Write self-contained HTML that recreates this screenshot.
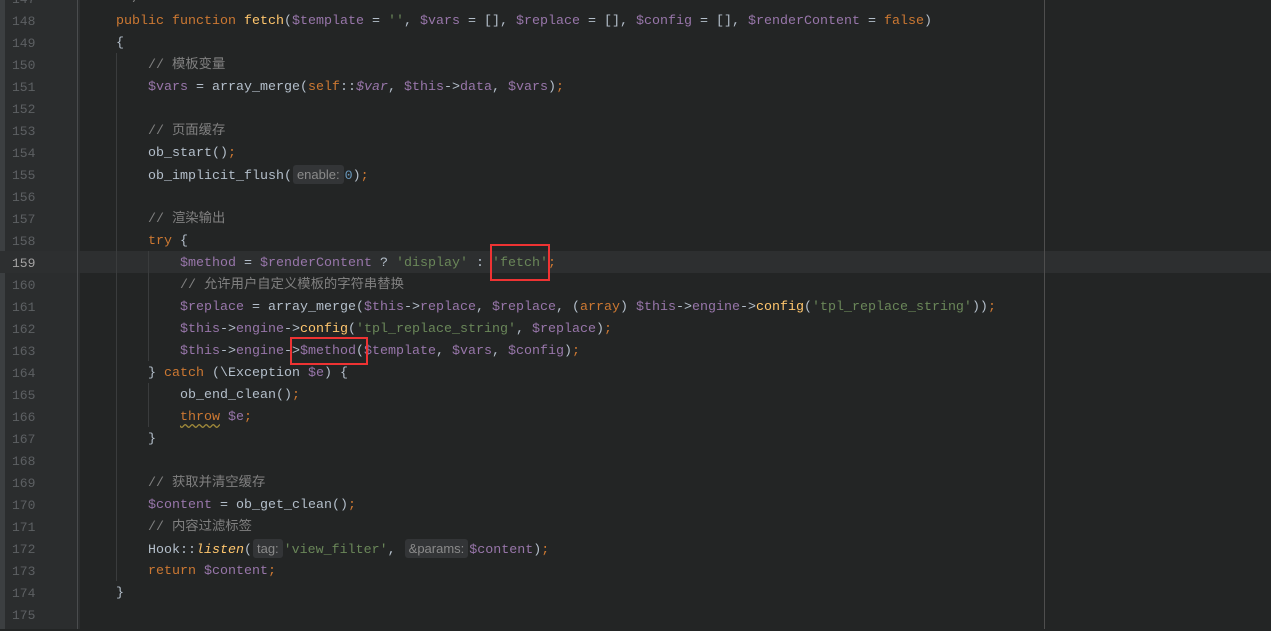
<!DOCTYPE html>
<html><head><meta charset="utf-8"><style>
body{margin:0;width:1271px;height:629px;overflow:hidden;background:#232525;position:relative;font-family:"Liberation Mono","Noto Sans CJK SC",monospace;font-size:13.33px}
.gut{position:absolute;left:0;top:0;width:80px;height:629px;background:#2b2d2e}
.strip{position:absolute;left:0;top:0;width:5px;height:629px;background:#3c3f41}
.fold{position:absolute;left:77px;top:0;width:1px;height:629px;background:#4a4c4e}
.margin{position:absolute;left:1044px;top:0;width:1px;height:629px;background:#4e4e4e}
.cur{position:absolute;left:0;width:1271px;top:251px;height:22px;background:#2d2f30}
.wrap{position:absolute;left:0;top:2px;width:1271px;height:629px}
.ln{position:absolute;left:12px;width:30px;height:22px;line-height:22px;color:#5d6063;font-size:13px}
.l{position:absolute;left:84px;height:22px;line-height:22px;white-space:pre;color:#b4bfcb}
.k{color:#cc7832}.v{color:#9876aa}.s{color:#6a8759}.f{color:#ffc66d}.c{color:#808080}.i{font-style:italic}
.h{display:inline-block;background:#333537;color:#8a8a8a;font-family:"Liberation Sans",sans-serif;font-size:13px;line-height:19px;padding:0 4px;border-radius:3px;margin:0 1px}
.g{position:absolute;width:1px;background:#3a3c3d}
.box{position:absolute;border:2px solid #ee3333}
.w{text-decoration:underline wavy #a08a3a;text-underline-offset:3px}
</style></head><body>
<div class="gut"></div><div class="strip"></div>
<div class="cur"></div>
<div class="fold"></div>
<div class="margin"></div>
<div class="g" style="left:116px;top:53px;height:528px"></div>
<div class="g" style="left:148px;top:251px;height:110px"></div>
<div class="g" style="left:148px;top:383px;height:44px"></div>
<div class="wrap">
<div class="ln" style="top:-13px">147</div>
<div class="ln" style="top:9px">148</div>
<div class="ln" style="top:31px">149</div>
<div class="ln" style="top:53px">150</div>
<div class="ln" style="top:75px">151</div>
<div class="ln" style="top:97px">152</div>
<div class="ln" style="top:119px">153</div>
<div class="ln" style="top:141px">154</div>
<div class="ln" style="top:163px">155</div>
<div class="ln" style="top:185px">156</div>
<div class="ln" style="top:207px">157</div>
<div class="ln" style="top:229px">158</div>
<div class="ln" style="top:251px;color:#a4a3a3">159</div>
<div class="ln" style="top:273px">160</div>
<div class="ln" style="top:295px">161</div>
<div class="ln" style="top:317px">162</div>
<div class="ln" style="top:339px">163</div>
<div class="ln" style="top:361px">164</div>
<div class="ln" style="top:383px">165</div>
<div class="ln" style="top:405px">166</div>
<div class="ln" style="top:427px">167</div>
<div class="ln" style="top:449px">168</div>
<div class="ln" style="top:471px">169</div>
<div class="ln" style="top:493px">170</div>
<div class="ln" style="top:515px">171</div>
<div class="ln" style="top:537px">172</div>
<div class="ln" style="top:559px">173</div>
<div class="ln" style="top:581px">174</div>
<div class="ln" style="top:603px">175</div>

<div class="l c" style="top:-13px">     */</div>
<div class="l" style="top:9px">    <span class="k">public function </span><span class="f">fetch</span>(<span class="v">$template</span> = <span class="s">''</span>, <span class="v">$vars</span> = [], <span class="v">$replace</span> = [], <span class="v">$config</span> = [], <span class="v">$renderContent</span> = <span class="k">false</span>)</div>
<div class="l" style="top:31px">    {</div>
<div class="l c" style="top:53px">        // 模板变量</div>
<div class="l" style="top:75px">        <span class="v">$vars</span> = array_merge(<span class="k">self</span>::<span class="v i">$var</span>, <span class="v">$this</span>-&gt;<span class="v">data</span>, <span class="v">$vars</span>)<span class="k">;</span></div>
<div class="l c" style="top:119px">        // 页面缓存</div>
<div class="l" style="top:141px">        ob_start()<span class="k">;</span></div>
<div class="l" style="top:163px">        ob_implicit_flush(<span class="h">enable:</span><span style="color:#6897bb">0</span>)<span class="k">;</span></div>
<div class="l c" style="top:207px">        // 渲染输出</div>
<div class="l" style="top:229px">        <span class="k">try</span> {</div>
<div class="l" style="top:251px">            <span class="v">$method</span> = <span class="v">$renderContent</span> ? <span class="s">'display'</span> : <span class="s">'fetch'</span><span class="k">;</span></div>
<div class="l c" style="top:273px">            // 允许用户自定义模板的字符串替换</div>
<div class="l" style="top:295px">            <span class="v">$replace</span> = array_merge(<span class="v">$this</span>-&gt;<span class="v">replace</span>, <span class="v">$replace</span>, (<span class="k">array</span>) <span class="v">$this</span>-&gt;<span class="v">engine</span>-&gt;<span class="f">config</span>(<span class="s">'tpl_replace_string'</span>))<span class="k">;</span></div>
<div class="l" style="top:317px">            <span class="v">$this</span>-&gt;<span class="v">engine</span>-&gt;<span class="f">config</span>(<span class="s">'tpl_replace_string'</span>, <span class="v">$replace</span>)<span class="k">;</span></div>
<div class="l" style="top:339px">            <span class="v">$this</span>-&gt;<span class="v">engine</span>-&gt;<span class="v">$method</span>(<span class="v">$template</span>, <span class="v">$vars</span>, <span class="v">$config</span>)<span class="k">;</span></div>
<div class="l" style="top:361px">        } <span class="k">catch</span> (\Exception <span class="v">$e</span>) {</div>
<div class="l" style="top:383px">            ob_end_clean()<span class="k">;</span></div>
<div class="l" style="top:405px">            <span class="k w">throw</span> <span class="v">$e</span><span class="k">;</span></div>
<div class="l" style="top:427px">        }</div>
<div class="l c" style="top:471px">        // 获取并清空缓存</div>
<div class="l" style="top:493px">        <span class="v">$content</span> = ob_get_clean()<span class="k">;</span></div>
<div class="l c" style="top:515px">        // 内容过滤标签</div>
<div class="l" style="top:537px">        Hook::<span class="f i">listen</span>(<span class="h">tag:</span><span class="s">'view_filter'</span>, <span class="h">&amp;params:</span><span class="v">$content</span>)<span class="k">;</span></div>
<div class="l" style="top:559px">        <span class="k">return </span><span class="v">$content</span><span class="k">;</span></div>
<div class="l" style="top:581px">    }</div>
</div>
<div class="box" style="left:490px;top:244px;width:56px;height:33px"></div>
<div class="box" style="left:290px;top:337px;width:74px;height:24px"></div>
</body></html>
